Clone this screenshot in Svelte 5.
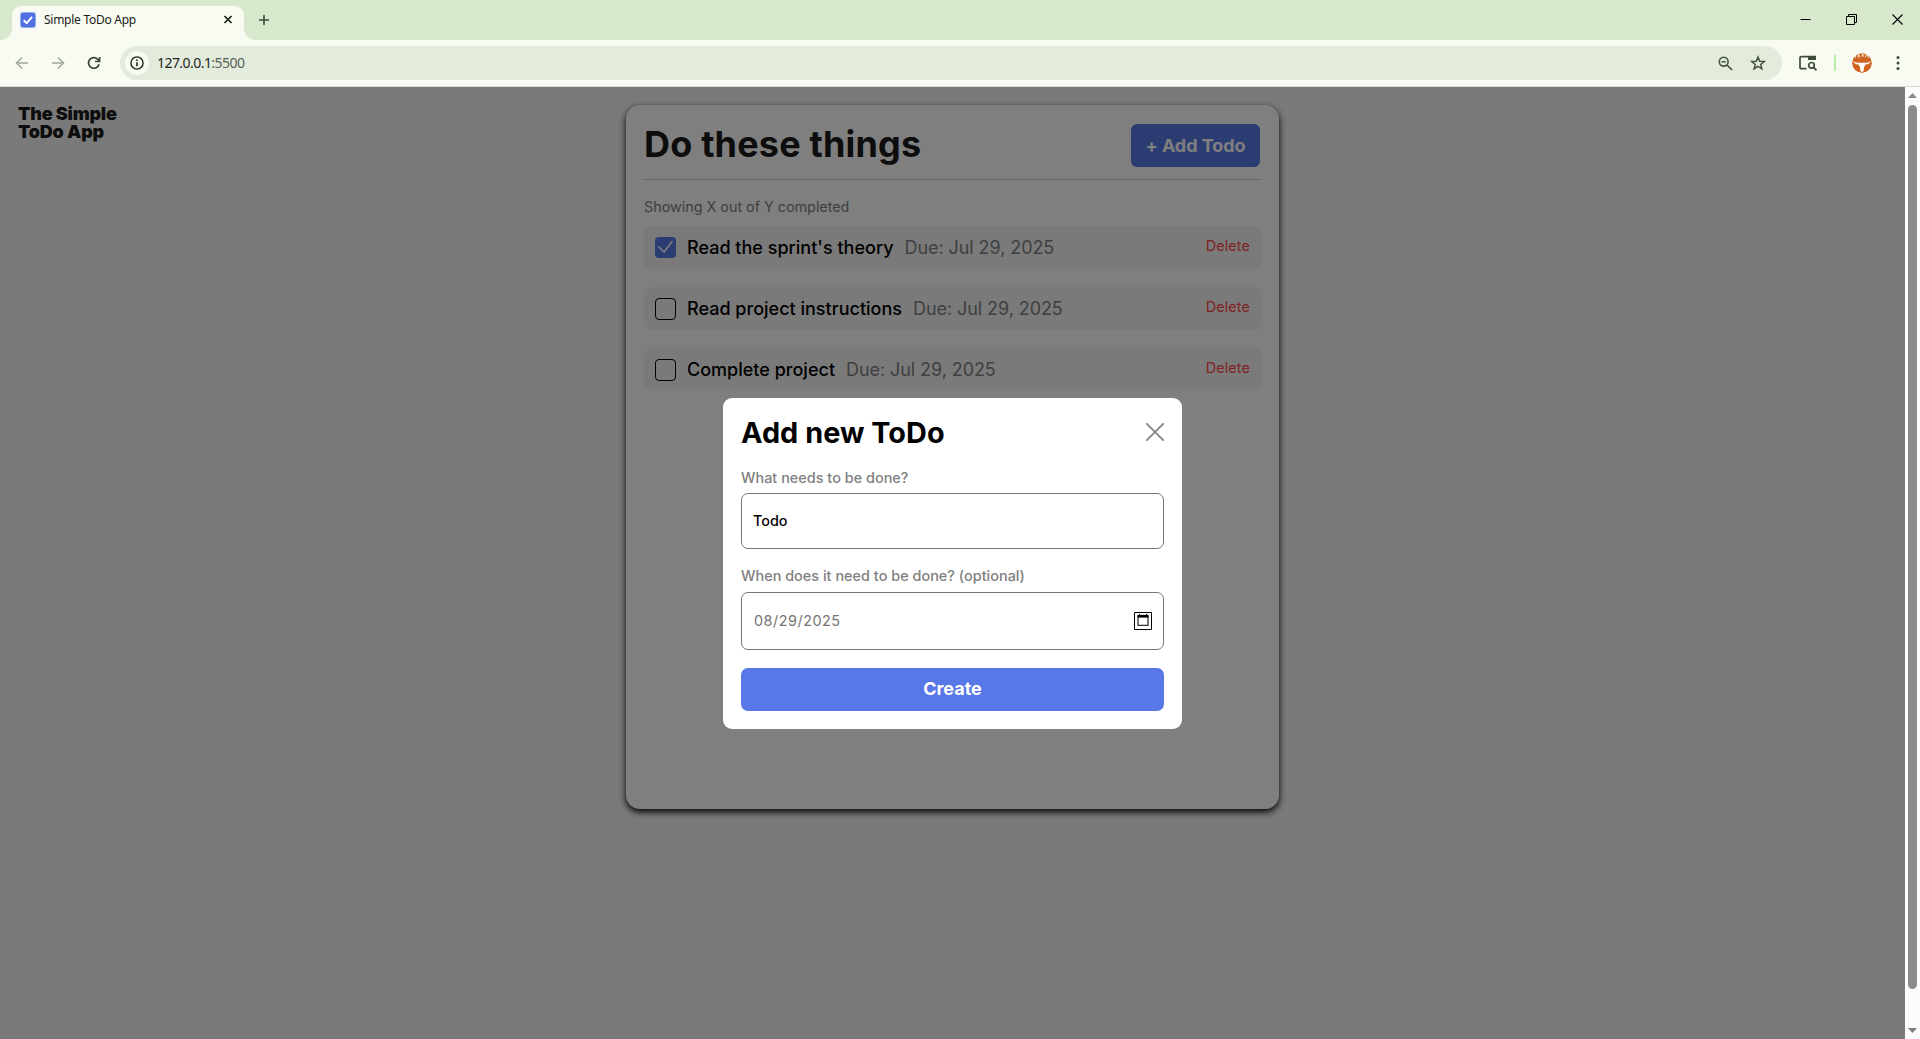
<script>
  const todos = [
    { name: "Read the sprint's theory", due: 'Due: Jul 29, 2025', done: true },
    { name: 'Read project instructions', due: 'Due: Jul 29, 2025', done: false },
    { name: 'Complete project', due: 'Due: Jul 29, 2025', done: false },
  ];
</script>

<div class="browser">
  <header class="tabs">
    <div class="tab">
      <svg class="favicon" width="16" height="16" viewBox="0 0 16 16">
        <rect width="16" height="16" rx="3" fill="#90a7f1" />
        <rect x="1" y="1" width="14" height="14" rx="2" fill="#4e70df" />
        <path d="M3.7 8.2l3 2.9 5.4-6.3" fill="none" stroke="#fff" stroke-width="2" />
      </svg>
      <span class="tab-title">Simple ToDo App</span>
      <svg width="10" height="10" viewBox="0 0 10 10" fill="none" stroke="#1c2219" stroke-width="1.7"><path d="M1.500 1l7 7M8.500 1l-7 7" /></svg>
    </div>
    <svg class="new-tab" width="12" height="12" viewBox="0 0 12 12" fill="none" stroke="#3d4d3a" stroke-width="1.6"><path d="M6 1v10M1 6h10" /></svg>
    <div class="window-buttons">
      <svg width="11" height="11" viewBox="0 0 11 11" stroke="#000"><path d="M.5 5.5h10" /></svg>
      <svg width="11" height="11" viewBox="0 0 11 11" fill="none" stroke="#000"><path d="M.5 2.5h8v8h-8zM2.5 2.5v-2h8v8h-2" /></svg>
      <svg width="11" height="11" viewBox="0 0 11 11" fill="none" stroke="#000" stroke-width="1.1"><path d="M.5.5l10 10M10.500.5l-10 10" /></svg>
    </div>
  </header>

  <nav class="toolbar">
    <div class="nav-buttons">
      <svg width="14" height="14" viewBox="0 0 14 14" fill="none" stroke="#a3a9a0" stroke-width="1.6"><path d="M13 7H2M7 1.500L1.500 7 7 12.500" /></svg>
      <svg width="14" height="14" viewBox="0 0 14 14" fill="none" stroke="#a3a9a0" stroke-width="1.6"><path d="M1 7h11M7 1.500L12.500 7 7 12.500" /></svg>
      <svg width="14" height="14" viewBox="0 0 14 14" fill="none" stroke="#384537" stroke-width="1.7"><path d="M12 8.200A5.300 5.300 0 1 1 10.700 3.300L12.500 5M12.600 1v4.500H8" /></svg>
    </div>
    <div class="address">
      <span class="site-info">
        <svg width="14" height="14" viewBox="0 0 14 14" fill="none" stroke="#20261e" stroke-width="1.400"><circle cx="7" cy="7" r="6.100" /><path d="M7 6.200v4M7 3.600v1.500" stroke-width="1.600" /></svg>
      </span>
      <span class="url">127.0.0.1<span class="port">:5500</span></span>
      <svg class="zoom" width="15" height="15" viewBox="0 0 15 15" fill="none" stroke="#44503f" stroke-width="1.600"><circle cx="5.700" cy="5.700" r="4.400" /><path d="M9 9l5 5M3.600 5.700h4.200" /></svg>
      <svg width="16" height="16" viewBox="0 0 16 16" fill="none" stroke="#44503f" stroke-width="1.500"><path d="M8 2l1.700 4.200 4.500.3-3.500 2.900 1.200 4.400L8 11.400l-3.900 2.400 1.200-4.400-3.500-2.900 4.500-.3z" /></svg>
    </div>
    <svg class="side-search" width="18" height="16" viewBox="0 0 18 16" fill="none" stroke="#3d4d3a" stroke-width="1.700">
      <path d="M7.500 13.700H2.300Q1 13.700 1 12.500V2.800Q1 1.700 2.300 1.700H16V5" /><path d="M9 3h7.800" stroke-width="4" /><circle cx="12.500" cy="10.300" r="2.800" /><path d="M14.500 12.300l3 3" />
    </svg>
    <i class="separator"></i>
    <svg class="avatar" width="20" height="20" viewBox="0 0 20 20">
      <circle cx="10" cy="10" r="10" fill="#cf6521" />
      <path d="M3.500 4.700V1.500M2.500 2.500l2-1M6 4V.5h2M6 2.300h2M6 4h2M9.500.5l2.500 3.300M12 .5L9.500 3.800M13.500 4l1-3 2 3.800" fill="none" stroke="#fff" stroke-width=".8" />
      <path d="M1 8.300c2 1.300 4.300 1.500 6.700 1.500h4.600c2.400 0 4.700-.2 6.700-1.500-.8 2.100-2.800 3-5.500 3.200l-1.500 2.700-.5 4q-1.500 1.200-3 0l-.5-4-1.500-2.700C3.800 11.300 1.800 10.400 1 8.300z" fill="#fff" />
    </svg>
    <svg class="menu" width="4" height="16" viewBox="0 0 4 16" fill="#3d4d3a"><circle cx="2" cy="2.500" r="1.500" /><circle cx="2" cy="8" r="1.500" /><circle cx="2" cy="13.500" r="1.500" /></svg>
  </nav>

  <div class="viewport">
    <div class="page">
      <h1 class="logo">The Simple<br />ToDo App</h1>
      <main class="card">
        <div class="card-head">
          <h2>Do these things</h2>
          <button class="add">+ Add Todo</button>
        </div>
        <p class="counter">Showing X out of Y completed</p>
        <ul>
          {#each todos as todo}
            <li>
              <span class="check" class:done={todo.done}>
                {#if todo.done}
                  <svg width="21" height="21" viewBox="0 0 21 21" fill="none" stroke="#fff" stroke-width="1.500"><path d="M3.500 9.500l5.500 5.500L17.500 4" /></svg>
                {/if}
              </span>
              <span class="name">{todo.name}</span>
              <span class="due">{todo.due}</span>
              <button class="delete">Delete</button>
            </li>
          {/each}
        </ul>
      </main>
      <div class="overlay">
        <form class="modal">
          <div class="modal-head">
            <h3>Add new ToDo</h3>
            <svg class="close" width="18" height="18" viewBox="0 0 18 18" fill="none" stroke="#808080" stroke-width="1.700"><path d="M.3.3l17.400 17.400M17.700.3L.3 17.700" /></svg>
          </div>
          <div class="label first">What needs to be done?</div>
          <div class="field"><span class="value">Todo</span></div>
          <div class="label second">When does it need to be done? (optional)</div>
          <div class="field date">
            <span class="value">08/29/2025</span>
            <svg width="18" height="18" viewBox="0 0 18 18" fill="none" stroke="#000"><path d="M.5.500h17v17H.5z" /><path d="M4 4.500h10V13.300H4z" stroke="#333" stroke-width="1.300" /><path d="M3.500 4.200h11" stroke-width="2.600" /><path d="M5.500 2v2M12.500 2v2" /></svg>
          </div>
          <button class="create" type="button">Create</button>
        </form>
      </div>
    </div>
    <div class="scrollbar">
      <svg width="9" height="5" viewBox="0 0 9 5" fill="#8b8b8b"><path d="M0 5L4.500 0 9 5z" /></svg>
      <i class="thumb"></i>
      <svg width="9" height="5" viewBox="0 0 9 5" fill="#7b7b7b"><path d="M0 0l4.500 5L9 0z" /></svg>
    </div>
  </div>
</div>

<style>
  :global(body) { overflow: hidden; }
  .browser, .browser * { box-sizing: border-box; }
  .browser { width: 1920px; height: 1039px; display: flex; flex-direction: column; font-family: Inter, sans-serif; }
  svg { display: block; flex: none; }
  h1, h2, h3, p, ul { margin: 0; padding: 0; }
  button { border: 0; padding: 0; margin: 0; font-family: inherit; background: none; }

  .tabs { height: 40px; flex: none; background: #d7e8cd; display: flex; align-items: center; padding: 0 17px 0 12px; }
  .tab {
    position: relative; align-self: flex-end; width: 232px; height: 34px; display: flex; align-items: center;
    padding: 0 11px 6px 8px; background: #f7fbf1; border-radius: 9px 9px 0 0;
  }
  .tab::before, .tab::after { content: ''; position: absolute; bottom: 0; width: 11px; height: 11px; }
  .tab::before { left: -11px; background: radial-gradient(circle at 0 0, transparent 10.500px, #f7fbf1 11px); }
  .tab::after { right: -11px; background: radial-gradient(circle at 100% 0, transparent 10.500px, #f7fbf1 11px); }
  .tab-title { flex: 1; margin-left: 8px; font: 12px/16px 'Noto Sans', sans-serif; letter-spacing: -0.270px; color: #1b211a; white-space: nowrap; }
  .new-tab { margin-left: 14px; }
  .window-buttons { margin: 0 0 1px auto; display: flex; gap: 35px; }

  .toolbar { height: 47px; flex: none; background: #f7fbf1; border-bottom: 1px solid #d6dad1; display: flex; align-items: center; padding: 0 20px 0 15px; }
  .nav-buttons { display: flex; gap: 22px; width: 105px; }
  .address { width: 1662px; height: 34px; border-radius: 17px; background: #e3ebdc; display: flex; align-items: center; padding: 0 16px 0 5px; }
  .site-info { width: 24px; height: 24px; border-radius: 50%; background: #f7fbf1; display: flex; align-items: center; justify-content: center; }
  .url { flex: 1; margin-left: 8px; font: 14px/20px 'Noto Sans', sans-serif; letter-spacing: -0.550px; color: #20261e; }
  .port { color: #596255; }
  .zoom { margin-right: 17px; }
  .side-search { margin-left: 17px; }
  .separator { width: 2px; height: 16px; margin: 0 16px 0 17px; background: #b9eea9; }
  .avatar { border-radius: 50%; }
  .menu { margin-left: auto; }

  .viewport { flex: 1; min-height: 0; display: flex; }
  .page { position: relative; width: 1905px; background: #f4f4f4; padding: 18px; display: grid; grid-template-columns: 1fr 653px 1fr; align-items: start; }
  .logo { font-size: 18px; line-height: 18px; font-weight: 900; letter-spacing: -0.200px; color: #1a1a1a; }
  .card { height: 704px; background: #fff; border-radius: 14px; padding: 18px; box-shadow: 0 3px 7px #000; }
  .card-head { display: flex; justify-content: space-between; height: 57px; padding-right: 1px; border-bottom: 1px solid #ccc; }
  h2 { font-size: 36px; line-height: 42px; font-weight: 700; letter-spacing: 0.180px; color: #1a1a1a; white-space: nowrap; }
  .add { width: 129px; height: 43px; margin-top: 1px; border-radius: 6px; background: #5778e6; color: #fff; font-size: 18px; font-weight: 700; letter-spacing: -0.050px; }
  .counter { margin-top: 18px; height: 28px; font-size: 14.400px; line-height: 18px; letter-spacing: -0.030px; color: #808080; }
  ul { list-style: none; display: flex; flex-direction: column; gap: 18px; }
  li { height: 43px; border-radius: 7px; background: #f4f4f4; display: flex; align-items: center; padding: 0 11px; font-size: 18px; line-height: 22px; white-space: nowrap; }
  .check { width: 21px; height: 22px; border: 1px solid #000; border-radius: 4px; margin-right: 11px; }
  .check.done { height: 21px; border: 0; background: #5778e6; }
  .name { color: #000; font-weight: 500; letter-spacing: 0.010px; margin-right: 11px; }
  .due { color: #808080; letter-spacing: -0.070px; }
  .delete { margin: 0 0 3px auto; font-size: 14.400px; line-height: 18px; letter-spacing: 0.100px; color: #f44; }

  .overlay { position: absolute; inset: 0; background: rgba(0, 0, 0, 0.5); display: flex; align-items: center; justify-content: center; }
  .modal { width: 459px; height: 331px; background: #fff; border-radius: 9px; padding: 18px; display: flex; flex-direction: column; }
  .modal-head { display: flex; justify-content: space-between; height: 34px; }
  .close { margin-top: 7px; }
  h3 { font-size: 28.800px; line-height: 34px; font-weight: 700; color: #000; letter-spacing: 0.050px; }
  .label { font-size: 14.400px; line-height: 18px; color: #808080; font-weight: 500; letter-spacing: 0.030px; white-space: nowrap; }
  .first { margin: 19px 0 6px; }
  .second { margin: 18px 0 7px; }
  .field { height: 56px; border: 1px solid #757575; border-radius: 7px; display: flex; align-items: center; justify-content: space-between; padding: 0 11px; font-size: 14.400px; font-weight: 500; color: #000; }
  .date { height: 58px; color: #757575; font-weight: 400; }
  .date .value { padding-left: 1px; letter-spacing: 0.520px; }
  .create { height: 43px; margin-top: 18px; padding-bottom: 2px; border-radius: 7px; background: #5778e6; color: #fff; font-size: 18px; font-weight: 700; }

  .scrollbar { width: 15px; background: #fcfcfc; display: flex; flex-direction: column; align-items: center; padding: 6px 0; }
  .thumb { width: 9px; height: 884px; margin: 7px 0 39px; border-radius: 5px; background: #8b8b8b; }
</style>
